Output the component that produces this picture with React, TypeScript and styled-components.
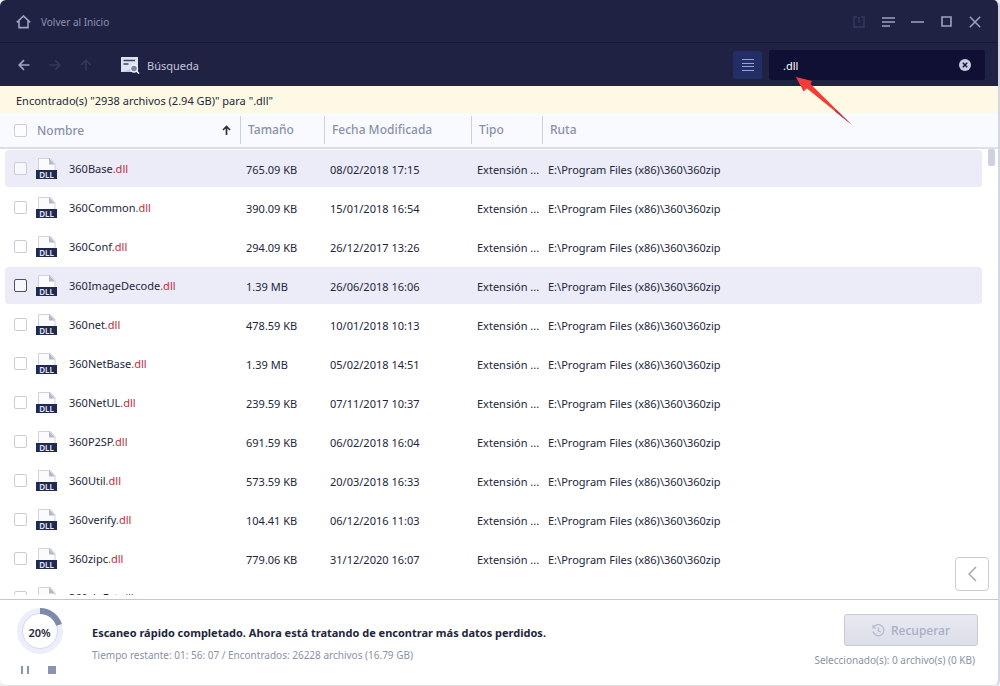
import React from "react";
import styled, { createGlobalStyle } from "styled-components";

const GlobalStyle = createGlobalStyle`
  *, *::before, *::after { box-sizing: border-box; }
  body {
    margin: 0;
    background: #eef0f5;
    font-family: "Noto Sans", "Open Sans", sans-serif;
    font-size: 11px;
    color: #23263a;
  }
  button, input { font: inherit; }
`;

const Window = styled.main`
  display: flex;
  flex-direction: column;
  height: 100vh;
  min-height: 400px;
  background: #fff;
  border-right: 2px solid #d3d7e1;
  border-bottom: 1px solid #dfe1e6;
  border-radius: 6px;
  overflow: hidden;
`;

const TitleBar = styled.header`
  display: flex;
  align-items: center;
  justify-content: space-between;
  height: 43px;
  flex: none;
  padding: 1px 11px 0 16px;
  background: #1f2243;
  border-bottom: 1px solid #171936;
`;

const HomeLink = styled.a`
  display: flex;
  align-items: center;
  gap: 10px;
  color: #8d92b4;
  font-size: 10px;
  text-decoration: none;
`;

const Group = styled.div<{ $gap?: number; $top?: boolean }>`
  display: flex;
  align-items: ${(p) => (p.$top ? "flex-start" : "center")};
  gap: ${(p) => p.$gap ?? 0}px;
`;

const IconButton = styled.button<{ $size?: number }>`
  display: flex;
  align-items: center;
  justify-content: center;
  width: ${(p) => p.$size ?? 24}px;
  height: ${(p) => p.$size ?? 24}px;
  padding: 0;
  border: 0;
  background: none;
  color: #9ea3c2;
`;

const ToolBar = styled.nav`
  display: flex;
  align-items: center;
  justify-content: space-between;
  height: 43px;
  flex: none;
  padding: 0 13px 0 12px;
  background: #1f2243;
`;

const Location = styled.div`
  display: flex;
  align-items: center;
  gap: 7px;
  margin-left: 15px;
  padding-top: 2px;
  color: #c4c8dd;
`;

const ListButton = styled(IconButton)`
  width: 29px;
  height: 28px;
  border-radius: 3px;
  background: #232e66;
`;

const SearchBox = styled.div`
  position: relative;
  display: flex;
  align-items: center;
  width: 216px;
  height: 30px;
  padding: 0 8px 0 14px;
  border-radius: 3px;
  background: #0f1033;
`;

const SearchInput = styled.input`
  flex: 1;
  min-width: 0;
  padding: 2px 0 0;
  border: 0;
  outline: 0;
  background: none;
  color: #fff;
`;

const Pointer = styled.svg`
  position: absolute;
  left: 27px;
  top: 26px;
  z-index: 2;
  pointer-events: none;
`;

const Notice = styled.p`
  margin: 0;
  flex: none;
  height: 27px;
  padding-left: 16px;
  background: #fef9e4;
  line-height: 29px;
`;

const ListArea = styled.section`
  position: relative;
  flex: 1;
  min-height: 0;
  padding-bottom: 4px;
`;

const Scroller = styled.div`
  height: 100%;
  overflow-y: auto;
  scrollbar-width: none;
`;

const FileTable = styled.table`
  width: 100%;
  table-layout: fixed;
  border-collapse: separate;
  border-spacing: 0;
`;

const HeadCell = styled.th<{ $width?: number }>`
  width: ${(p) => (p.$width ? `${p.$width}px` : "auto")};
  height: 36px;
  padding: 0;
  background: #f9faff;
  border-bottom: 2px solid #dcdfe9;
  color: #8991a6;
  font-size: 12px;
  font-weight: 500;
  text-align: left;
`;

const HeadLabel = styled.div`
  height: 28px;
  padding-left: 7px;
  border-left: 1px solid #ccd1de;
  line-height: 28px;
`;

const NameHead = styled.div`
  display: flex;
  align-items: center;
  gap: 10px;
  padding: 0 9px 0 14px;

  & svg { margin-left: auto; }
`;

const Row = styled.tr<{ $active?: boolean }>`
  & td {
    height: 39px;
    padding: 1px 0 0 6px;
    border: 0 solid transparent;
    border-width: 1px 0;
    background: ${(p) => (p.$active ? "#ebecf8" : "#fff")};
    background-clip: padding-box;
    overflow: hidden;
    white-space: nowrap;
  }
  & td:first-child {
    padding: 0 0 0 9px;
    border-left-width: 5px;
    border-radius: 9px 0 0 9px / 4px 0 0 4px;
  }
  & td:last-child {
    border-right-width: 16px;
    border-radius: 0 20px 20px 0 / 0 4px 4px 0;
  }
`;

const FileLabel = styled.label`
  display: flex;
  align-items: center;
  gap: 10px;

  & svg { margin-left: -1px; }
  & span { margin-left: 2px; }
`;

const Match = styled.b`
  color: #bf2b39;
  font-weight: 400;
`;

const Check = styled.input<{ $dark?: boolean }>`
  appearance: none;
  flex: none;
  width: 13px;
  height: 13px;
  margin: 0;
  border: 1px solid ${(p) => (p.$dark ? "#4d5068" : "#cbcdd8")};
  border-radius: 2px;
  background: #fff9;
`;

const Thumb = styled.div`
  position: absolute;
  top: 36px;
  right: 3px;
  width: 7px;
  height: 17px;
  border-radius: 2px;
  background: #ced2df;
`;

const PanelToggle = styled(IconButton)`
  position: absolute;
  right: 9px;
  bottom: 8px;
  width: 34px;
  height: 34px;
  border: 1px solid #c9ccd3;
  border-radius: 4px;
  background: #fff;
  color: #a5a9b5;
`;

const Footer = styled.footer`
  display: flex;
  justify-content: space-between;
  flex: none;
  height: 86px;
  padding-right: 20px;
  border-top: 1px solid #c4c7cc;
`;

const Progress = styled.div`
  display: flex;
  flex-direction: column;
  align-items: center;
  width: 80px;
  padding-top: 7px;
`;

const ScanControls = styled.div`
  display: flex;
  gap: 3px;
  margin-top: 3px;
  padding-right: 3px;
`;

const Status = styled.div`
  padding: 23px 0 0 12px;
`;

const StatusTitle = styled.p`
  margin: 0;
  font-size: 11px;
  font-weight: 700;
  line-height: 20px;
`;

const Muted = styled.p`
  margin: 0;
  color: #8a92a6;
  font-size: 10px;
  line-height: 24px;
`;

const Actions = styled.div`
  display: flex;
  flex-direction: column;
  align-items: flex-end;
  gap: 2px;
  padding-top: 14px;

  & p { margin-right: 3px; }
`;

const RecoverButton = styled.button`
  display: flex;
  align-items: center;
  justify-content: center;
  gap: 6px;
  width: 134px;
  height: 32px;
  border: 1px solid #c6c9d6;
  border-radius: 3px;
  background: linear-gradient(#e8e9f1, #dcdee8);
  color: #a9aec4;
  font-size: 12px;
  font-weight: 500;
`;

const DllIcon = () => (
  <svg width="21" height="21" viewBox="0 0 21 21" aria-hidden="true">
    <path d="M2.500 13V.5h12l4.500 5V13" fill="#fbfbfe" stroke="#d0d2dc" />
    <path d="M13 0l6 6.500h-6z" fill="#b4b9ca" />
    <rect y="12" width="21" height="9" fill="#202a50" />
    <text x="10.500" y="19.500" textAnchor="middle" fontSize="8" fontWeight="600" fill="#e6e9f5">DLL</text>
  </svg>
);

const NavArrow = ({ angle = 0, color = "#9ea3c2" }: { angle?: number; color?: string }) => (
  <svg width="12" height="12" viewBox="0 0 12 12" fill="none" stroke={color} strokeWidth="1.7" aria-hidden="true">
    <path d="M11.5 6H1.5M6 1.2L1.2 6L6 10.8" transform={`rotate(${angle} 6 6)`} />
  </svg>
);

const files = [
  ["360Base", "765.09 KB", "08/02/2018 17:15"],
  ["360Common", "390.09 KB", "15/01/2018 16:54"],
  ["360Conf", "294.09 KB", "26/12/2017 13:26"],
  ["360ImageDecode", "1.39 MB", "26/06/2018 16:06"],
  ["360net", "478.59 KB", "10/01/2018 10:13"],
  ["360NetBase", "1.39 MB", "05/02/2018 14:51"],
  ["360NetUL", "239.59 KB", "07/11/2017 10:37"],
  ["360P2SP", "691.59 KB", "06/02/2018 16:04"],
  ["360Util", "573.59 KB", "20/03/2018 16:33"],
  ["360verify", "104.41 KB", "06/12/2016 11:03"],
  ["360zipc", "779.06 KB", "31/12/2020 16:07"],
  ["360zipExt", "779.06 KB", "31/12/2020 16:07"],
];

export default function App() {
  return (
    <>
      <GlobalStyle />
      <Window>
        <TitleBar>
          <HomeLink href="#">
            <svg width="15" height="14" viewBox="0 0 15 14" fill="none" stroke="#9ea3c2" strokeWidth="1.6" aria-hidden="true">
              <path d="M.8 7.4L7.5 1L14.2 7.4M3 6V12.6H12V6" />
            </svg>
            Volver al Inicio
          </HomeLink>
          <Group $gap={5}>
            <IconButton aria-label="Guardar">
              <svg width="12" height="12" viewBox="0 0 12 12" fill="none" stroke="#343a60" strokeWidth="1.4">
                <path d="M4 1H1V11H11V1H8M6 1V7" />
              </svg>
            </IconButton>
            <IconButton aria-label="Menú">
              <svg width="13" height="10" viewBox="0 0 13 10" fill="none" stroke="currentColor" strokeWidth="1.5">
                <path d="M0 1H13M0 5H13M0 9H8" />
              </svg>
            </IconButton>
            <IconButton aria-label="Minimizar">
              <svg width="13" height="12" viewBox="0 0 13 12" stroke="currentColor" strokeWidth="1.4">
                <path d="M0 6H13" />
              </svg>
            </IconButton>
            <IconButton aria-label="Maximizar">
              <svg width="11" height="11" viewBox="0 0 11 11" fill="none" stroke="currentColor" strokeWidth="1.6">
                <path d="M1 1H10V10H1Z" />
              </svg>
            </IconButton>
            <IconButton aria-label="Cerrar">
              <svg width="12" height="12" viewBox="0 0 12 12" stroke="currentColor" strokeWidth="1.5">
                <path d="M.8 .8L11.2 11.2M11.2 .8L.8 11.2" />
              </svg>
            </IconButton>
          </Group>
        </TitleBar>

        <ToolBar>
          <Group $gap={7}>
            <IconButton aria-label="Atrás"><NavArrow /></IconButton>
            <IconButton aria-label="Adelante" disabled><NavArrow angle={180} color="#343858" /></IconButton>
            <IconButton aria-label="Subir" disabled><NavArrow angle={90} color="#343858" /></IconButton>
            <Location>
              <svg width="20" height="17" viewBox="0 0 20 17" aria-hidden="true">
                <path d="M1 0H18V15H1Z" fill="#c6cbe4" />
                <path d="M1 0H18V10L1 15Z" fill="#dfe2f2" />
                <path d="M3.5 3.5H15M3.5 7H8.500" stroke="#3c4166" strokeWidth="1.3" />
                <circle cx="14" cy="11.500" r="3.500" fill="#7f84a0" stroke="#eff1fb" strokeWidth="1.400" />
                <path d="M16.500 14L19 16.500" stroke="#eff1fb" strokeWidth="1.600" />
              </svg>
              Búsqueda
            </Location>
          </Group>
          <Group $gap={7}>
            <ListButton aria-label="Vista de lista">
              <svg width="12" height="12" viewBox="0 0 12 12" stroke="#98a1cf">
                <path d="M0 .5H12M0 4.500H12M0 7.500H12M0 11.500H12" />
              </svg>
            </ListButton>
            <SearchBox>
              <SearchInput type="text" aria-label="Buscar archivos" defaultValue=".dll" />
              <IconButton aria-label="Borrar búsqueda">
                <svg width="12" height="12" viewBox="0 0 12 12">
                  <circle cx="6" cy="6" r="6" fill="#c9cce0" />
                  <path d="M3.800 3.800L8.200 8.200M8.200 3.800L3.800 8.200" stroke="#0f1033" strokeWidth="1.400" />
                </svg>
              </IconButton>
              <Pointer width="58" height="50" viewBox="0 0 58 50" aria-hidden="true">
                <path d="M0 1L16 5L14.500 8L56 49L11 12.500L7.500 15.500Z" fill="#f43d38" />
                <path d="M40 33.500L56 49L39 35.500Z" fill="#a8424c" />
              </Pointer>
            </SearchBox>
          </Group>
        </ToolBar>

        <Notice>Encontrado(s) "2938 archivos (2.94 GB)" para ".dll"</Notice>

        <ListArea>
          <Scroller>
            <FileTable>
              <thead>
                <tr>
                  <HeadCell $width={240} scope="col">
                    <NameHead>
                      <Check type="checkbox" aria-label="Seleccionar todo" />
                      Nombre
                      <svg width="9" height="11" viewBox="0 0 9 11" fill="none" stroke="#2b2e3c" strokeWidth="1.700" aria-hidden="true">
                        <path d="M4.500 10V1.500M1 5L4.500 1.500L8 5" />
                      </svg>
                    </NameHead>
                  </HeadCell>
                  <HeadCell $width={84} scope="col"><HeadLabel>Tamaño</HeadLabel></HeadCell>
                  <HeadCell $width={147} scope="col"><HeadLabel>Fecha Modificada</HeadLabel></HeadCell>
                  <HeadCell $width={71} scope="col"><HeadLabel>Tipo</HeadLabel></HeadCell>
                  <HeadCell scope="col"><HeadLabel>Ruta</HeadLabel></HeadCell>
                </tr>
              </thead>
              <tbody>
                {files.map(([name, size, date], i) => (
                  <Row key={name} $active={i === 0 || i === 3}>
                    <td>
                      <FileLabel>
                        <Check type="checkbox" $dark={i === 3} />
                        <DllIcon />
                        <span>{name}<Match>.dll</Match></span>
                      </FileLabel>
                    </td>
                    <td>{size}</td>
                    <td>{date}</td>
                    <td>Extensión ...</td>
                    <td>E:\Program Files (x86)\360\360zip</td>
                  </Row>
                ))}
              </tbody>
            </FileTable>
          </Scroller>
          <Thumb />
          <PanelToggle aria-label="Mostrar panel">
            <svg width="9" height="16" viewBox="0 0 9 16" fill="none" stroke="currentColor" strokeWidth="1.500">
              <path d="M8 1L1 8L8 15" />
            </svg>
          </PanelToggle>
        </ListArea>

        <Footer>
          <Group $top>
            <Progress>
              <svg width="48" height="48" viewBox="0 0 48 48" role="img" aria-label="20%">
                <circle cx="24" cy="24" r="20" fill="#fff" stroke="#eceffa" strokeWidth="6" />
                <circle cx="24" cy="24" r="17.500" fill="none" stroke="#d6dbee" />
                <circle cx="24" cy="24" r="20" fill="none" stroke="#7e89ab" strokeWidth="6" pathLength="100" strokeDasharray="20 80" transform="rotate(-90 24 24)" />
                <text x="23.500" y="30" textAnchor="middle" fontSize="11" fontWeight="600" fill="#23263a">20%</text>
              </svg>
              <ScanControls>
                <IconButton aria-label="Pausar">
                  <svg width="8" height="8" viewBox="0 0 8 8" fill="#8c94b4"><path d="M0 0H2V8H0ZM6 0H8V8H6Z" /></svg>
                </IconButton>
                <IconButton aria-label="Detener">
                  <svg width="8" height="8" viewBox="0 0 8 8" fill="#8c94b4"><path d="M0 0H8V8H0Z" /></svg>
                </IconButton>
              </ScanControls>
            </Progress>
            <Status>
              <StatusTitle>Escaneo rápido completado. Ahora está tratando de encontrar más datos perdidos.</StatusTitle>
              <Muted>Tiempo restante: 01: 56: 07 / Encontrados: 26228 archivos (16.79 GB)</Muted>
            </Status>
          </Group>
          <Actions>
            <RecoverButton disabled>
              <svg width="13" height="13" viewBox="0 0 13 13" fill="none" stroke="#b6bace" strokeWidth="1.200" aria-hidden="true">
                <path d="M1.500 3.500A5.500 5.500 0 1 1 1 7.500M1 1V4H4M6.500 3.500V7L9 8" />
              </svg>
              Recuperar
            </RecoverButton>
            <Muted>Seleccionado(s): 0 archivo(s) (0 KB)</Muted>
          </Actions>
        </Footer>
      </Window>
    </>
  );
}
